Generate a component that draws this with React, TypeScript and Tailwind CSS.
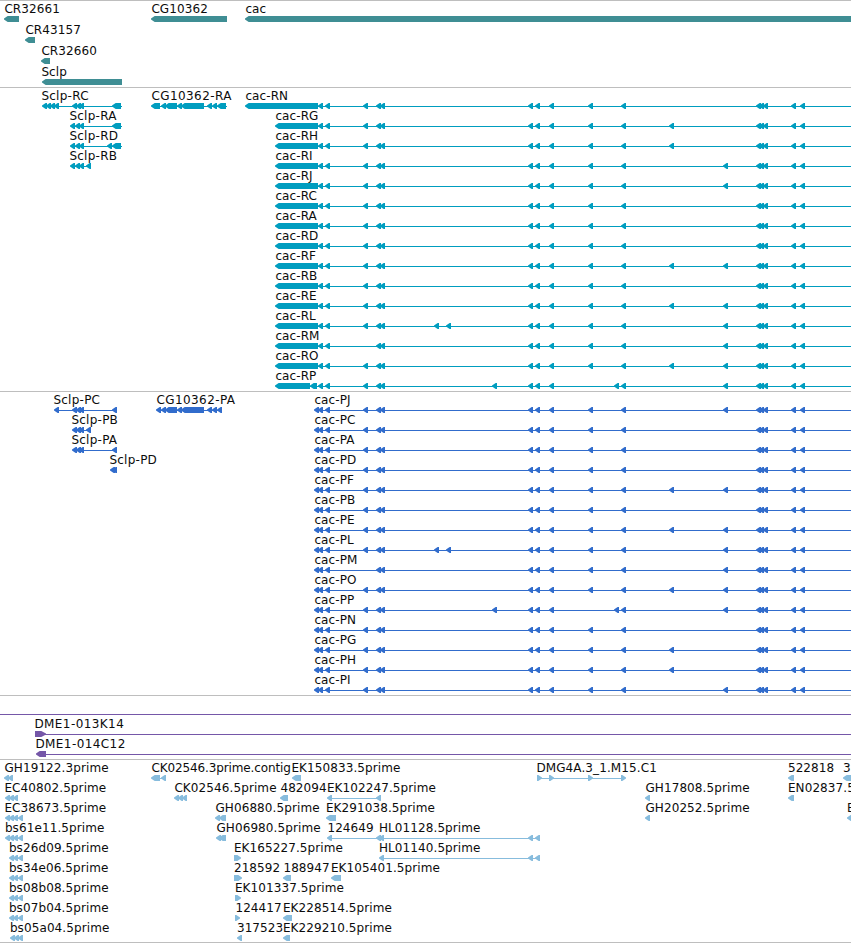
type Span = [number, number];

interface Feature {
  label?: string;
  // left edge of the label
  x?: number;
  parts: Span[];
  // extent of the intron line
  line?: Span;
  forward?: boolean;
  head?: number;
}

type Row = Feature[];

const WIDTH = 851;

const feature = (label: string, x: number, parts: Span[], line?: Span): Feature => ({ label, x, parts, line });

/* ---------- genes ---------- */

const genes: Row[] = [
  [
    feature("CR32661", 4, [[4, 19]]),
    feature("CG10362", 151, [[151, 227]]),
    feature("cac", 245, [[245, 860]]),
  ],
  [feature("CR43157", 25, [[25, 35]])],
  [feature("CR32660", 41, [[41, 50]])],
  [feature("Sclp", 41, [[42, 122]])],
];

/* ---------- transcripts and proteins ---------- */

// exons shared by nearly every cac isoform
const CAC_EXONS = [318, 325, 363, 376, 380, 528, 535, 549, 588, 621, 756, 759, 763, 791, 800];

function cac(name: string, x: number, first: Span[], extra: number[] = [], missing: number[] = []): Feature {
  const starts = CAC_EXONS.filter((s) => !missing.includes(s)).concat(extra);
  const exons = starts.map((s): Span => [s, s + 5]);
  return feature(`cac-${name}`, x, [...first, ...exons], [first[0][0] + 4, WIDTH]);
}

const rna = (name: string, extra?: number[], missing?: number[]) => cac(name, 275, [[275, 318]], extra, missing);
const protein = (name: string, extra?: number[], missing?: number[]) => cac(name, 314, [[314, 319]], extra, missing);

const transcripts: Row[] = [
  [
    feature("Sclp-RC", 41, [[42, 47], [46, 51], [50, 55], [54, 59], [72, 77], [76, 81], [79, 84], [112, 121]], [44, 122]),
    feature(
      "CG10362-RA",
      151,
      [[151, 160], [161, 166], [165, 177], [177, 182], [181, 204], [207, 212], [212, 217], [217, 226]],
      [153, 227],
    ),
    cac("RN", 245, [[245, 318]]),
  ],
  [feature("Sclp-RA", 69, [[70, 75], [75, 80], [79, 84], [112, 121]], [72, 122]), rna("RG", [669])],
  [feature("Sclp-RD", 69, [[70, 75], [75, 80], [79, 84], [107, 112], [112, 121]], [72, 122]), rna("RH", [669])],
  [feature("Sclp-RB", 69, [[70, 75], [75, 80], [79, 84], [86, 91]], [72, 91]), rna("RI", [723])],
  [rna("RJ", [723])],
  [rna("RC")],
  [rna("RA")],
  [rna("RD")],
  [rna("RF", [669, 723])],
  [rna("RB")],
  [rna("RE", [669, 723])],
  [rna("RL", [434, 446, 723])],
  [rna("RM", [723], [363])],
  [rna("RO", [669, 723])],
  [cac("RP", 275, [[275, 310], [310, 317]], [492, 614, 723], [588])],
];

const proteins: Row[] = [
  [
    feature("Sclp-PC", 53, [[54, 59], [72, 77], [76, 81], [79, 84], [112, 117]], [56, 117]),
    feature(
      "CG10362-PA",
      156,
      [[156, 161], [161, 166], [165, 177], [177, 182], [181, 204], [207, 212], [212, 217], [217, 222]],
      [158, 222],
    ),
    protein("PJ", [723]),
  ],
  [feature("Sclp-PB", 71, [[72, 77], [76, 81], [79, 84], [86, 91]], [74, 91]), protein("PC")],
  [feature("Sclp-PA", 71, [[72, 77], [76, 81], [79, 84], [112, 117]], [74, 117]), protein("PA")],
  [feature("Sclp-PD", 109, [[110, 115], [112, 117]]), protein("PD")],
  [protein("PF", [669, 723])],
  [protein("PB")],
  [protein("PE", [669, 723])],
  [protein("PL", [434, 446, 723])],
  [protein("PM", [723], [363])],
  [protein("PO", [669, 723])],
  [protein("PP", [492, 614, 723], [588])],
  [protein("PN")],
  [protein("PG", [669])],
  [protein("PH", [669])],
  [protein("PI", [723])],
];

/* ---------- BACs ---------- */

const bacs: Row[] = [
  [{ parts: [], line: [0, WIDTH] }],
  [{ label: "DME1-013K14", x: 34, parts: [[35, 46]], line: [40, WIDTH], forward: true, head: 6 }],
  [{ label: "DME1-014C12", x: 35, parts: [[36, 46]], line: [40, WIDTH] }],
];

/* ---------- ESTs ---------- */

const EST3: Span[] = [[9, 14], [13, 18], [18, 23]];
const EST4: Span[] = [[5, 10], [9, 14], [13, 18], [18, 23]];

const ests: Row[] = [
  [
    feature("GH19122.3prime", 4, [[4, 9], [8, 13]]),
    feature("CK02546.3prime.contig", 151, [[151, 160], [161, 166]], [153, 166]),
    feature("EK150833.5prime", 291, [[292, 301]]),
    {
      label: "DMG4A.3_1.M15.C1",
      x: 536,
      parts: [[537, 542], [549, 554], [588, 593], [621, 626]],
      line: [537, 624],
      forward: true,
    },
    feature("522818", 787.5, [[788, 794]]),
    feature("3", 842.5, [[843, 855]]),
  ],
  [
    feature("EC40802.5prime", 4, [[5, 10], [9, 14], [13, 18]], [7, 18]),
    feature("CK02546.5prime", 174, [[174, 179], [178, 183], [182, 187]], [176, 187]),
    feature("482094", 280, [[280, 288]]),
    feature("EK102247.5prime", 326.5, [[327, 332], [376, 381]], [329, 381]),
    feature("GH17808.5prime", 645, [[645, 650]]),
    feature("EN02837.5prime", 787.5, [[788, 794]]),
  ],
  [
    feature("EC38673.5prime", 4, EST4, [7, 23]),
    feature("GH06880.5prime", 215, [[215, 220], [219, 226]]),
    feature("EK291038.5prime", 325.5, [[326, 336]]),
    feature("GH20252.5prime", 645, [[645, 650]]),
    feature("E", 846.5, [[847, 855]]),
  ],
  [
    feature("bs61e11.5prime", 4.5, EST4, [7, 23]),
    feature("GH06980.5prime", 216, [[216, 221], [219, 226]]),
    feature("124649", 327, [[327, 332], [376, 381]], [329, 381]),
    feature("HL01128.5prime", 378.5, [[379, 384], [528, 533], [535, 540]], [381, 540]),
  ],
  [
    feature("bs26d09.5prime", 8.5, EST3, [11, 23]),
    { label: "EK165227.5prime", x: 233.5, parts: [[234, 241]], forward: true },
    feature("HL01140.5prime", 378.5, [[379, 384], [528, 533], [535, 540]], [381, 540]),
  ],
  [
    feature("bs34e06.5prime", 8.5, EST3, [11, 23]),
    { label: "218592", x: 233.5, parts: [[234, 242]], forward: true },
    feature("188947", 283, [[283, 291]]),
    feature("EK105401.5prime", 330.5, [[331, 341]]),
  ],
  [
    feature("bs08b08.5prime", 8.5, EST3, [11, 23]),
    { label: "EK101337.5prime", x: 234.5, parts: [[235, 241]], forward: true },
  ],
  [
    feature("bs07b04.5prime", 8.5, EST3, [11, 23]),
    { label: "124417", x: 235, parts: [[235, 240]], forward: true },
    feature("EK228514.5prime", 282.5, [[283, 292]]),
  ],
  [
    feature("bs05a04.5prime", 9.5, [[10, 15], [14, 19], [18, 23]], [12, 23]),
    feature("317523", 236.5, [[237, 242]]),
    feature("EK229210.5prime", 282.5, [[283, 290]]),
  ],
];

function tracking(label: string) {
  if (label.endsWith(".contig")) return "tracking-[-0.12px]";
  if (label.startsWith("CG10362-") || label.startsWith("DME1-")) return "tracking-[0.42px]";
  if (label.startsWith("Sclp-")) return "tracking-[0.25px]";
  return "tracking-[0.1px]";
}

// Box with one blunt pointed end; anything 5px or shorter is just an arrow head
function Exon({ span, forward, head = 5 }: { span: Span; forward?: boolean; head?: number }) {
  const [a, b] = span;
  const h = head - 1.3;
  const points = forward
    ? `${a},15 ${b - h},15 ${b},17.5 ${b},18.5 ${b - h},21 ${a},21`
    : `${b},15 ${a + h},15 ${a},17.5 ${a},18.5 ${a + h},21 ${b},21`;
  return <polygon points={points} />;
}

function TrackRow({ row, height }: { row: Row; height: number }) {
  return (
    <svg width={WIDTH} height={height} className="block overflow-visible">
      {row.map((f, i) => (
        <g key={i} fill="currentColor">
          {f.line && <rect x={f.line[0]} y={18} width={f.line[1] - f.line[0]} height={1} />}
          {f.parts.map((p) => (
            <Exon key={p[0]} span={p} forward={f.forward} head={f.head} />
          ))}
          {f.label && (
            <text x={(f.x ?? 0) + 0.4} y={12} className={`fill-[#0c0c0c] text-[12px] ${tracking(f.label)}`}>
              {f.label}
            </text>
          )}
        </g>
      ))}
    </svg>
  );
}

function Track({ rows, className, rowHeight = 20 }: { rows: Row[]; className: string; rowHeight?: number }) {
  return (
    <section className={`border-b border-[#bebebe] ${className}`}>
      {rows.map((row, i) => (
        <TrackRow key={i} row={row} height={rowHeight} />
      ))}
    </section>
  );
}

export default function App() {
  return (
    <main className="flex h-[943px] w-[851px] flex-col overflow-hidden border-t border-[#bebebe] bg-white font-['DejaVu_Sans',sans-serif]">
      <Track rows={genes} rowHeight={21} className="pb-[2px] text-[#3f8e94]" />
      <Track rows={transcripts} className="pb-[3px] text-[#009dbf]" />
      <Track rows={proteins} className="pb-[3px] text-[#316ccc]" />
      <Track rows={bacs} className="pb-[3px] text-[#7557a8]" />
      <Track rows={ests} className="pb-[2px] text-[#87bcdd]" />
    </main>
  );
}
